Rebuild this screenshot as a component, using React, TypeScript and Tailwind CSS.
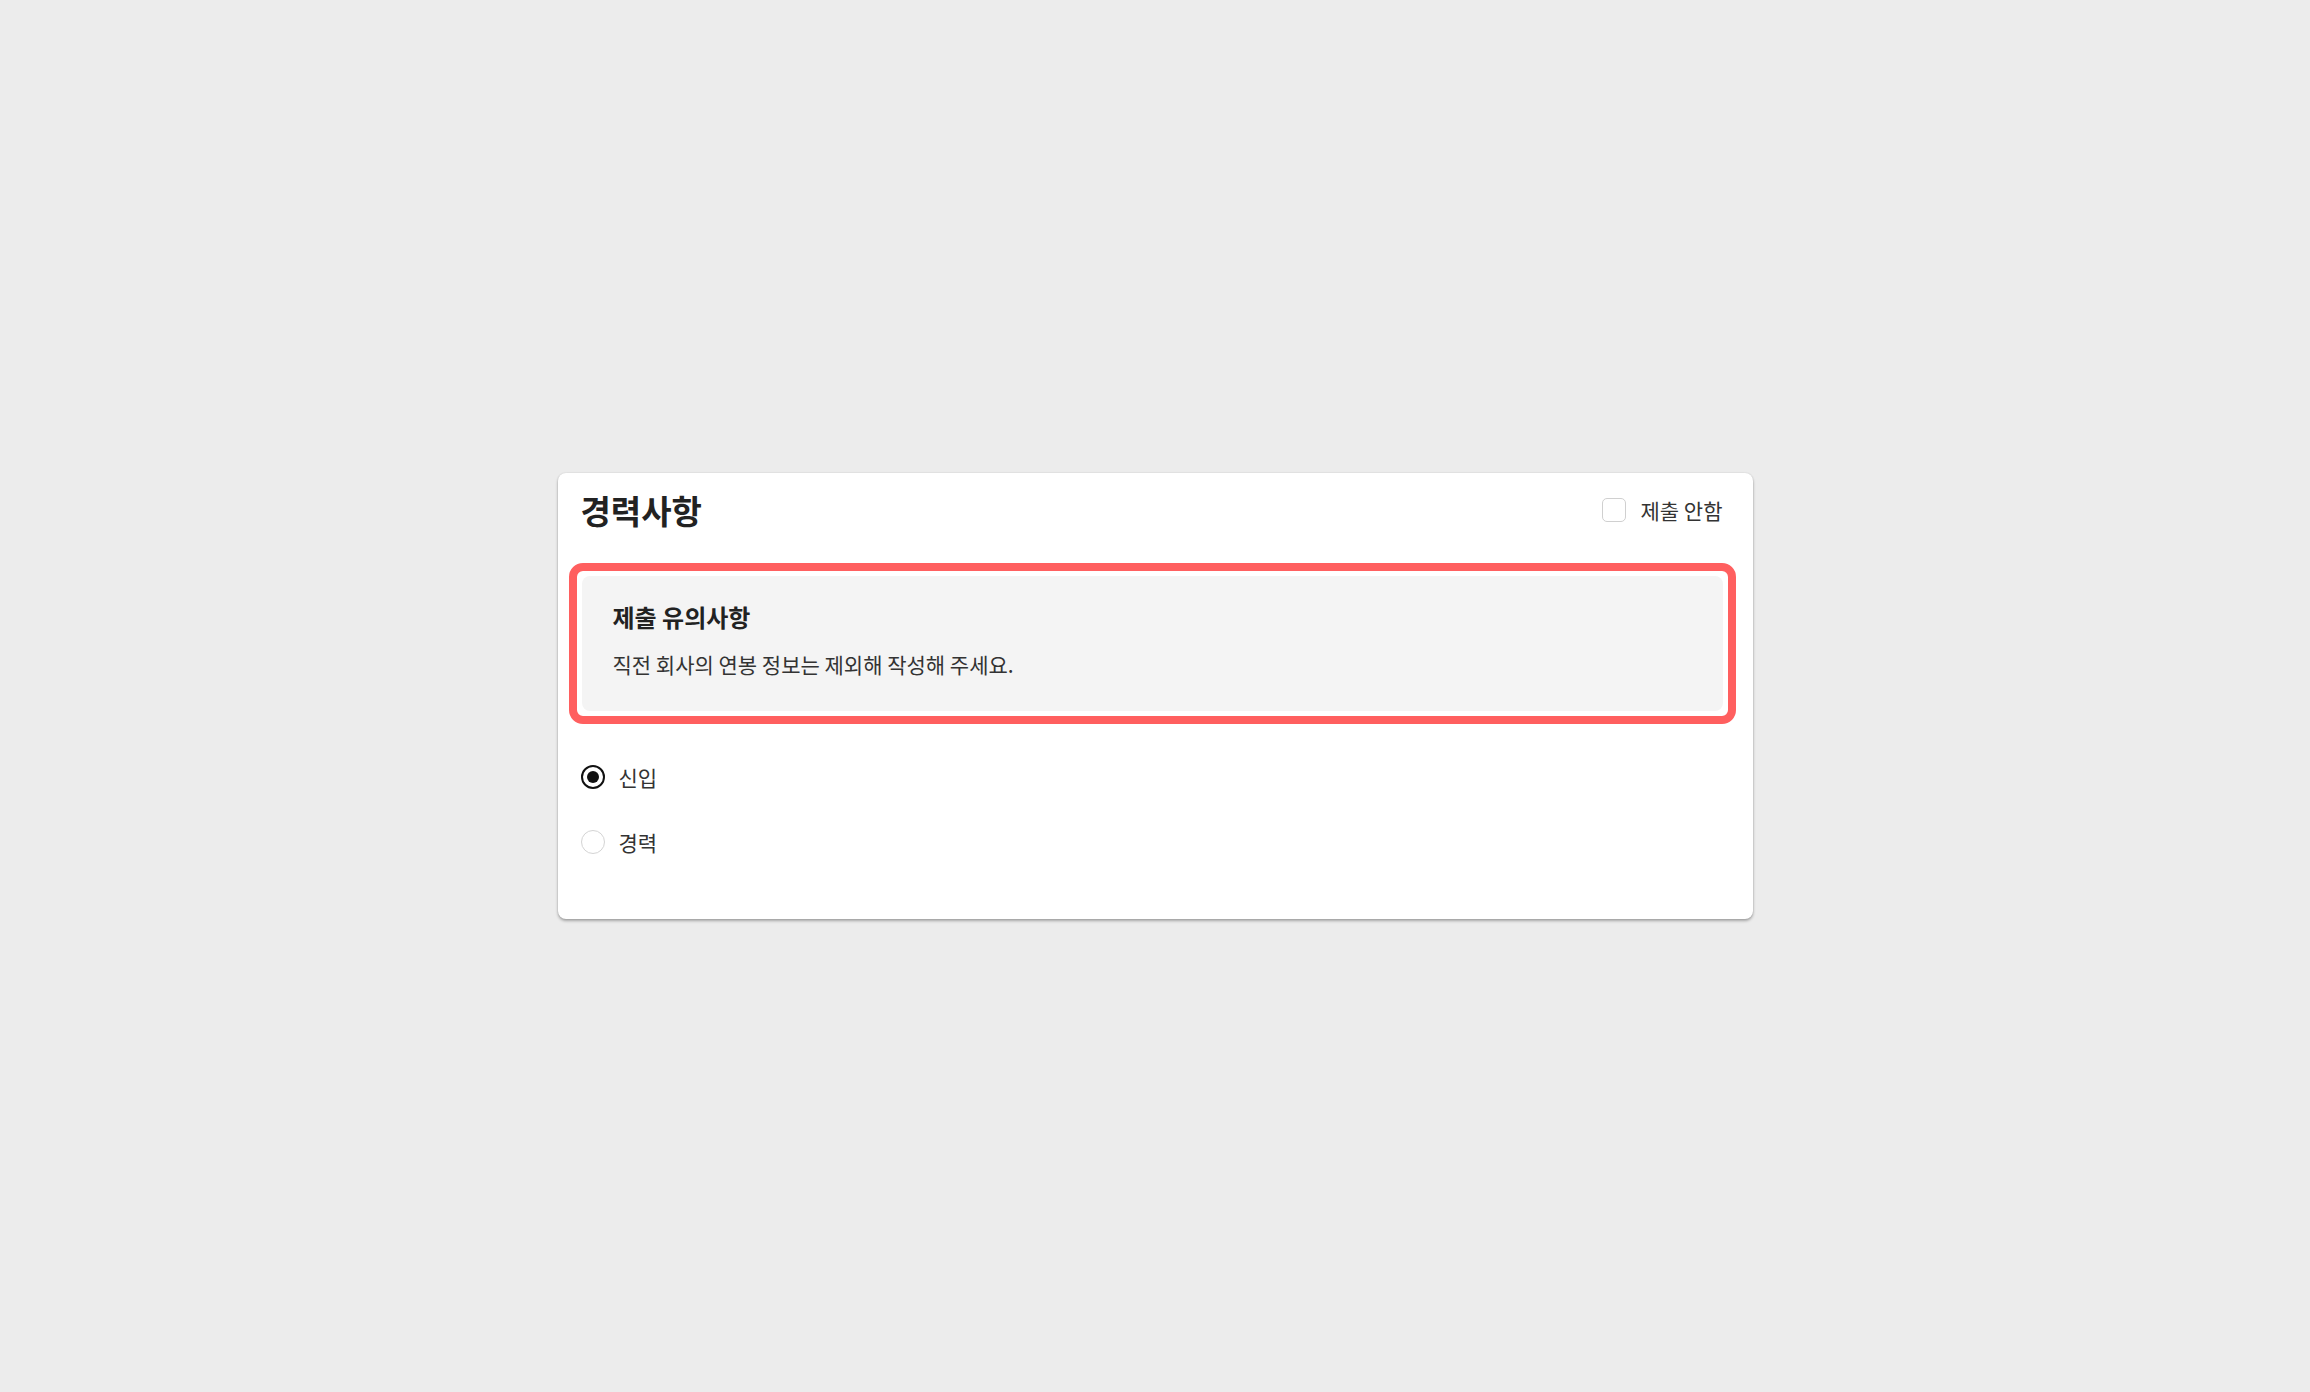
import { useState } from "react";

const fontStack = { fontFamily: '"Noto Sans CJK KR", "Noto Sans", sans-serif' };

const options = [
  { id: "new", label: "신입" },
  { id: "career", label: "경력" },
];

export default function App() {
  const [skip, setSkip] = useState(false);
  const [kind, setKind] = useState("new");

  return (
    <div className="min-h-screen w-full bg-[#ececec] flex items-center justify-center" style={fontStack}>
      <section className="w-[1195px] bg-white rounded-lg shadow-[0_2px_3px_rgba(0,0,0,0.3),0_0_2px_rgba(0,0,0,0.12)] pb-[57px]">
        {/* ─── Header ─── */}
        <div className="h-[74px] mb-[16px] flex items-center justify-between pl-[23px] pr-[30px]">
          <h1 className="text-[33px] leading-none font-bold text-[#222222]">경력사항</h1>
          <label className="flex items-center gap-[15px] cursor-pointer select-none">
            <button
              type="button"
              onClick={() => setSkip(!skip)}
              className={`w-6 h-6 rounded-[5px] border-[1.5px] ${
                skip ? "border-[#222] bg-[#222]" : "border-[#d0d0d0] bg-white"
              }`}
            />
            <span className="text-[21px] leading-none text-[#333333]">제출 안함</span>
          </label>
        </div>

        {/* ─── Notice (highlighted) ─── */}
        <div className="ml-[11px] mr-[17px] border-[8px] border-[#ff5f5f] rounded-[14px] p-[5px]">
          <div className="bg-[#f4f4f4] rounded-lg h-[135px] pt-[24px] pl-[31px]">
            <h2 className="text-[24px] leading-[34px] font-bold text-[#222222]">제출 유의사항</h2>
            <p className="mt-[15px] text-[21px] leading-[31px] text-[#333333]">
              직전 회사의 연봉 정보는 제외해 작성해 주세요.
            </p>
          </div>
        </div>

        {/* ─── Options ─── */}
        <div className="mt-[33px] pl-[23px] flex flex-col gap-[25px]">
          {options.map((opt) => {
            const checked = kind === opt.id;
            return (
              <label
                key={opt.id}
                onClick={() => setKind(opt.id)}
                className="h-10 flex items-center gap-[14px] cursor-pointer select-none"
              >
                <span
                  className={`w-6 h-6 rounded-full flex items-center justify-center ${
                    checked ? "border-2 border-[#111111]" : "border-[1.5px] border-[#d4d4d4]"
                  }`}
                >
                  {checked && <span className="w-3 h-3 rounded-full bg-[#111111]" />}
                </span>
                <span className="text-[21px] leading-none text-[#333333]">{opt.label}</span>
              </label>
            );
          })}
        </div>
      </section>
    </div>
  );
}
